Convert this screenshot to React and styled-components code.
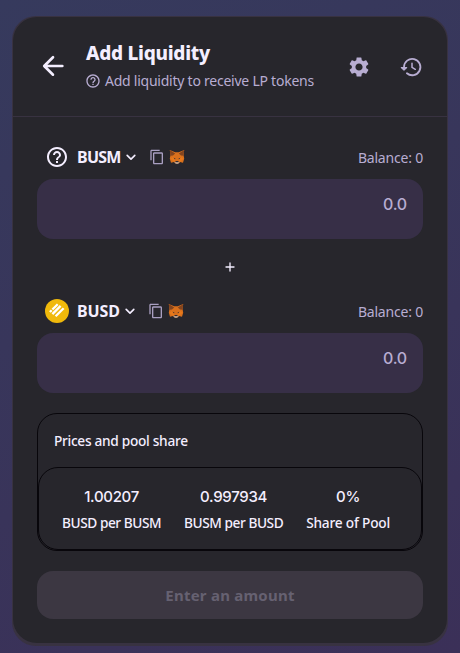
import React from 'react';
import styled, { createGlobalStyle } from 'styled-components';
import { MdSettings, MdHelpOutline, MdContentCopy } from 'react-icons/md';

const GlobalStyle = createGlobalStyle`
* {
  box-sizing: border-box;
}
body {
  margin: 0;
  font-family: "Noto Sans", sans-serif;
  color: #f4eeff;
}
`;

const Page = styled.div`
  height: 653px;
  padding: 16px 12px 0;
  background: linear-gradient(155deg, #363a5d 0%, #3b3058 100%);
`;

const Card = styled.div`
  height: 630px;
  padding: 1px 1px 3px;
  border-radius: 24px;
  background-color: #383241;
  overflow: hidden;
`;

const CardInner = styled.div`
  height: 100%;
  border-radius: 24px;
  background-color: #27262c;
`;

const Header = styled.div`
  display: flex;
  align-items: center;
  height: 100px;
  padding: 0 24px;
  border-bottom: 1px solid #383241;
`;

const IconButton = styled.button`
  display: flex;
  padding: 0;
  border: 0;
  background: none;
  color: ${({ $color }) => $color || '#b8add2'};
  margin-left: ${({ $left }) => $left || 0}px;
  cursor: pointer;
`;

const BackButton = styled(IconButton)`
  margin-bottom: 2px;
`;

const Heading = styled.div`
  flex: 1;
  margin-left: 16px;
`;

const Title = styled.h2`
  margin: 0;
  padding-left: 1px;
  font-size: 19px;
  font-weight: 800;
  line-height: 22px;
  letter-spacing: -0.28px;
  white-space: nowrap;
`;

const Subtitle = styled.div`
  display: flex;
  align-items: center;
  gap: 4px;
  margin-top: 7px;
  font-size: 14px;
  line-height: 20px;
  color: #b8add2;
  letter-spacing: -0.24px;
  white-space: nowrap;
`;

const Body = styled.div`
  padding: 24px;
`;

const TokenRow = styled.div`
  display: flex;
  align-items: center;
  height: 32px;
  padding-left: 8px;
  margin-bottom: 6px;
`;

const Symbol = styled.span`
  margin-left: 8px;
  font-size: 16px;
  font-weight: 700;
  letter-spacing: ${({ $spacing }) => $spacing}px;
`;

const Balance = styled.span`
  margin-left: auto;
  font-size: 14px;
  color: #b8add2;
  letter-spacing: -0.2px;
`;

const AmountInput = styled.div`
  height: 60px;
  padding: 13px 16px;
  border-radius: 16px;
  background-color: #372f47;
  color: #b8add2;
  font-family: Inter, sans-serif;
  font-size: 16px;
  font-weight: 500;
  line-height: 24px;
  letter-spacing: -0.2px;
  text-align: right;
`;

const PlusRow = styled.div`
  display: flex;
  align-items: center;
  justify-content: center;
  height: 56px;
`;

const PoolBox = styled.div`
  height: 138px;
  margin-top: 20px;
  border: 1px solid #08060b;
  border-radius: 20px;
`;

const PoolTitle = styled.div`
  height: 53px;
  padding: 0 16px;
  font-size: 13.7px;
  font-weight: 500;
  line-height: 53px;
  letter-spacing: -0.3px;
`;

const PoolStats = styled.div`
  display: flex;
  justify-content: space-between;
  height: 83px;
  padding: 16px 31px 0 23px;
  border: 1px solid #08060b;
  border-radius: 20px;
`;

const Stat = styled.div`
  display: flex;
  flex-direction: column;
  align-items: center;
  white-space: nowrap;
`;

const StatValue = styled.span`
  font-family: Inter, sans-serif;
  font-size: 15px;
  font-weight: 500;
  line-height: 26px;
  letter-spacing: -0.3px;
`;

const StatLabel = styled.span`
  font-size: 13.7px;
  font-weight: 500;
  line-height: 25px;
  letter-spacing: ${({ $spacing }) => $spacing}px;
`;

const SubmitButton = styled.button`
  display: block;
  width: 100%;
  height: 48px;
  margin-top: 20px;
  padding: 0;
  border: 0;
  border-radius: 16px;
  background-color: #3c3742;
  color: #666171;
  font-family: "Noto Sans", sans-serif;
  font-size: 15px;
  font-weight: 700;
  letter-spacing: 0.24px;
`;

const Icon = styled.svg`
  display: block;
  flex-shrink: 0;
  margin-left: ${({ $left }) => $left || 0}px;
  fill: currentColor;
`;

const CopyIcon = styled(MdContentCopy)`
  margin-left: 8px;
  color: #a99fc1;
`;

const ArrowBack = () => (
  <Icon width="32" height="32" viewBox="0 0 24 24">
    <path d="M19 11H7.83l4.88-4.88c.39-.39.39-1.03 0-1.42a1 1 0 0 0-1.41 0l-6.59 6.59a1 1 0 0 0 0 1.41l6.59 6.59a1 1 0 0 0 1.41-1.41L7.83 13H19a1 1 0 0 0 0-2z" />
  </Icon>
);

const ChevronDown = () => (
  <Icon width="20" height="20" viewBox="0 0 24 24">
    <path d="M8.12 9.29L12 13.17l3.88-3.88a1 1 0 0 1 1.41 1.41l-4.59 4.59a1 1 0 0 1-1.41 0L6.7 10.7a1 1 0 0 1 0-1.41 1.02 1.02 0 0 1 1.42 0z" />
  </Icon>
);

const Plus = () => (
  <Icon width="16" height="16" viewBox="0 0 24 24">
    <path d="M18 13h-5v5a1 1 0 0 1-2 0v-5H6a1 1 0 0 1 0-2h5V6a1 1 0 0 1 2 0v5h5a1 1 0 0 1 0 2z" />
  </Icon>
);

const History = () => (
  <Icon width="24" height="24" viewBox="0 0 24 24">
    <path d="M5 12a8.2 8.2 0 1 1 2.9 6.3" fill="none" stroke="currentColor" strokeWidth="1.8" strokeLinecap="round" />
    <path d="M2.3 12h5.4c.5 0 .7.5.4.9l-2.7 2.7a.5.5 0 0 1-.8 0l-2.7-2.7c-.3-.4-.1-.9.4-.9z" />
    <path d="M13 8.2v4.1l3.3 2" fill="none" stroke="currentColor" strokeWidth="1.5" strokeLinecap="round" />
  </Icon>
);

const BusdLogo = () => (
  <Icon width="24" height="24" viewBox="0 0 24 24">
    <circle cx="12" cy="12" r="12" fill="#f0b90b" />
    <g stroke="#fff" strokeWidth="2.3">
      <path d="M4.9 13L6.7 11.2" />
      <path d="M7.4 10.5L12.7 5.2" />
      <path d="M7.4 15.1L15.6 6.9" />
      <path d="M10.6 17.3L18.6 9.3" />
    </g>
  </Icon>
);

const Fox = () => (
  <Icon width="16" height="16" viewBox="0 0 16 16" $left="4">
    <path fill="#d9701c" d="M.8 1l5.4 2.2h3.6L15.2 1l-.6 5.2.6 3.6-1.2 4-3-.8-1.8 1.6H6.8L5 13l-3 .8-1.2-4 .6-3.6z" />
    <path fill="#83451f" d="M.8 1l5.4 3.6L4 6.4 1.4 6.8zM15.2 1L9.8 4.6 12 6.4l2.6.4z" />
    <path fill="#e8791b" d="M1.4 9.8L5 7l1.4 4.4-1.6 1.4zM14.6 9.8L11 7l-1.4 4.4 1.6 1.4z" />
    <path fill="#2c2a35" d="M4.4 8.6l2 .9-.4.9zM11.6 8.6l-2 .9.4.9zM6.7 12h2.6l.3 1.2H6.4z" />
    <path fill="#c0ad9e" d="M5 12.8l1.6.4h2.8l1.6-.4-1.8 2H6.8z" />
  </Icon>
);

const Token = ({ symbol, logo, spacing }) => (
  <>
    <TokenRow>
      {logo}
      <Symbol $spacing={spacing}>{symbol}</Symbol>
      <ChevronDown />
      <CopyIcon size={16} />
      <Fox />
      <Balance>Balance: 0</Balance>
    </TokenRow>
    <AmountInput>0.0</AmountInput>
  </>
);

const stats = [
  { value: '1.00207', label: 'BUSD per BUSM', spacing: -0.45 },
  { value: '0.997934', label: 'BUSM per BUSD', spacing: -0.45 },
  { value: '0%', label: 'Share of Pool', spacing: -0.2 },
];

const App = () => {
  return (
    <Page>
      <GlobalStyle />
      <Card>
        <CardInner>
          <Header>
            <BackButton $color="#f4eeff"><ArrowBack /></BackButton>
            <Heading>
              <Title>Add Liquidity</Title>
              <Subtitle>
                <MdHelpOutline size={16} />
                Add liquidity to receive LP tokens
              </Subtitle>
            </Heading>
            <IconButton><MdSettings size={24} /></IconButton>
            <IconButton $left={28}><History /></IconButton>
          </Header>
          <Body>
            <Token symbol="BUSM" spacing={-0.75} logo={<MdHelpOutline size={24} />} />
            <PlusRow><Plus /></PlusRow>
            <Token symbol="BUSD" spacing={-0.1} logo={<BusdLogo />} />
            <PoolBox>
              <PoolTitle>Prices and pool share</PoolTitle>
              <PoolStats>
                {stats.map((s) => (
                  <Stat key={s.label}>
                    <StatValue>{s.value}</StatValue>
                    <StatLabel $spacing={s.spacing}>{s.label}</StatLabel>
                  </Stat>
                ))}
              </PoolStats>
            </PoolBox>
            <SubmitButton>Enter an amount</SubmitButton>
          </Body>
        </CardInner>
      </Card>
    </Page>
  );
};

export default App;
